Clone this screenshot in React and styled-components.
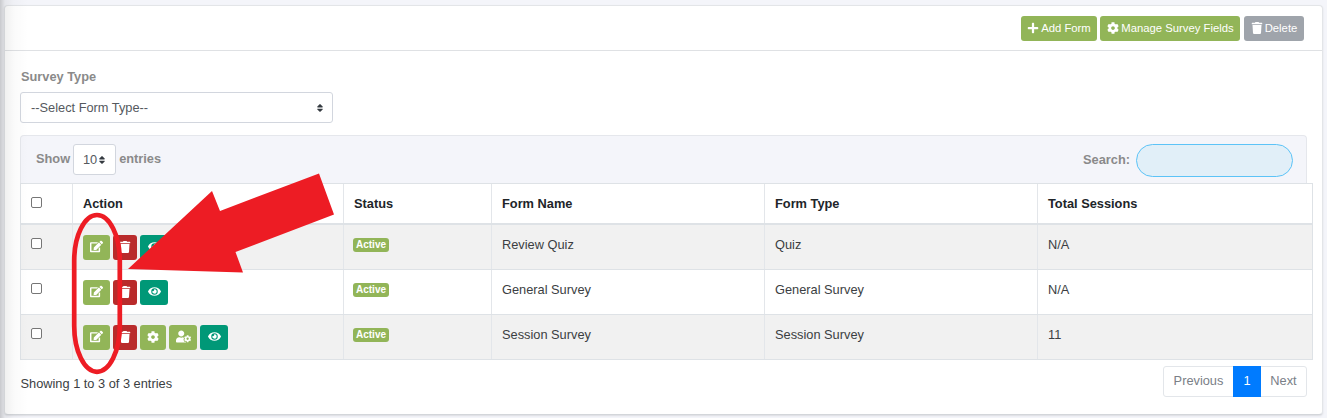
import React from "react";
import styled, { createGlobalStyle } from "styled-components";
import {
  FaPlus,
  FaCog,
  FaTrash,
  FaEdit,
  FaEye,
  FaUserCog,
  FaSort,
} from "react-icons/fa";

const green = "#92b558";
const red = "#b92b2b";
const teal = "#009877";

const rows = [
  { name: "Review Quiz", type: "Quiz", sessions: "N/A" },
  { name: "General Survey", type: "General Survey", sessions: "N/A" },
  { name: "Session Survey", type: "Session Survey", sessions: "11", full: true },
];

const App = () => {
  return (
    <Page>
      <GlobalStyle />
      <Card>
        <CardHeader>
          <HeadButton $w={76}>
            <FaPlus size={12} />
            Add Form
          </HeadButton>
          <HeadButton $w={140}>
            <FaCog size={12} />
            Manage Survey Fields
          </HeadButton>
          <HeadButton $w={60} $bg="#9fa4ab">
            <FaTrash size={12} />
            Delete
          </HeadButton>
        </CardHeader>

        <Body>
          <Label>Survey Type</Label>
          <Select>
            --Select Form Type--
            <Caret />
          </Select>

          <Toolbar>
            <Length>
              Show
              <LengthSelect>
                10
                <Caret />
              </LengthSelect>
              entries
            </Length>
            <SearchHold>
              Search:
              <SearchInput type="text" />
            </SearchHold>
          </Toolbar>

          <Table>
            <HeadRow>
              <Cell>
                <Check type="checkbox" />
              </Cell>
              <Cell>Action</Cell>
              <Cell>Status</Cell>
              <Cell>Form Name</Cell>
              <Cell>Form Type</Cell>
              <Cell>Total Sessions</Cell>
            </HeadRow>
            {rows.map((row) => (
              <Row key={row.name}>
                <Cell>
                  <Check type="checkbox" />
                </Cell>
                <Actions>
                  <IconButton $w={27}>
                    <FaEdit size={13} />
                  </IconButton>
                  <IconButton $w={24} $bg={red}>
                    <FaTrash size={12} />
                  </IconButton>
                  {row.full && (
                    <>
                      <IconButton $w={26}>
                        <FaCog size={12} />
                      </IconButton>
                      <IconButton $w={28}>
                        <FaUserCog size={15} />
                      </IconButton>
                    </>
                  )}
                  <IconButton $w={28} $bg={teal}>
                    <FaEye size={13} />
                  </IconButton>
                </Actions>
                <Cell>
                  <Badge>Active</Badge>
                </Cell>
                <Cell>{row.name}</Cell>
                <Cell>{row.type}</Cell>
                <Cell>{row.sessions}</Cell>
              </Row>
            ))}
          </Table>

          <Footer>
            <Info>Showing 1 to 3 of 3 entries</Info>
            <Pagination>
              <PageItem $w={69}>Previous</PageItem>
              <PageItem $w={28} $active>
                1
              </PageItem>
              <PageItem $w={45}>Next</PageItem>
            </Pagination>
          </Footer>
        </Body>
      </Card>

      <EdgeShadow />
      <Marks viewBox="0 0 1327 418">
        <rect
          x="74.2"
          y="215"
          width="45.6"
          height="156.8"
          rx="22.8"
          ry="46"
          fill="none"
          stroke="#ed1c24"
          strokeWidth="4.7"
        />
        <polygon
          points="128,269 212,191 220,211 319,173.5 334,214.5 235.5,252 243,272.5"
          fill="#ed1c24"
        />
      </Marks>
    </Page>
  );
};

const Caret = () => <CaretIcon size={10} />;

export default App;

const GlobalStyle = createGlobalStyle`
  * {
    box-sizing: border-box;
  }
  body {
    margin: 0;
    font-family: "Liberation Sans", Arial, sans-serif;
    font-size: 12.8px;
    color: #3b3e42;
  }
`;
const Page = styled.div`
  position: relative;
  width: 1327px;
  height: 418px;
  padding: 5px 4px 0 4px;
  background: #f4f5fa;
  overflow: hidden;
`;
const Card = styled.div`
  height: 410px;
  background: white;
  border: 1px solid #e3e5e8;
  border-bottom-color: #d3d6da;
  border-radius: 4px;
  box-shadow: 0 1px 2px rgba(0, 0, 0, 0.1);
`;
const CardHeader = styled.div`
  height: 45px;
  display: flex;
  justify-content: flex-end;
  gap: 3.5px;
  padding: 9.5px 18.5px 0 0;
  border-bottom: 1px solid #dfe1e4;
`;
const HeadButton = styled.button`
  width: ${(p) => p.$w}px;
  height: 25px;
  padding: 0 0 0 1px;
  display: flex;
  align-items: center;
  justify-content: center;
  gap: 2px;
  background: ${(p) => p.$bg || green};
  color: white;
  border: none;
  border-radius: 3px;
  font-family: inherit;
  font-size: 11.3px;
  white-space: nowrap;
`;
const Body = styled.div`
  padding: 18px 15px 0;
`;
const Label = styled.div`
  height: 23px;
  line-height: 15px;
  padding-left: 1px;
  color: #8a8a8a;
  font-weight: bold;
`;
const Select = styled.div`
  width: 313px;
  height: 31px;
  padding: 0 7px 0 10px;
  display: flex;
  align-items: center;
  justify-content: space-between;
  color: #55595e;
  border: 1px solid #d2d6de;
  border-radius: 3px;
`;
const CaretIcon = styled(FaSort)`
  color: #343a40;
`;
const Toolbar = styled.div`
  width: 1287px;
  height: 48px;
  margin-top: 12px;
  padding: 0 13.5px 0 15px;
  display: flex;
  justify-content: space-between;
  background: #f4f5fa;
  border: 1px solid #e5e7ec;
  border-bottom: none;
  border-radius: 4px 4px 0 0;
  color: #8a8a8a;
  font-weight: bold;
`;
const Length = styled.div`
  display: flex;
  gap: 3px;
  padding-top: 8px;
  line-height: 29px;
`;
const LengthSelect = styled.div`
  width: 43px;
  height: 31px;
  padding-left: 1px;
  display: flex;
  align-items: center;
  justify-content: center;
  background: white;
  color: #55595e;
  border: 1px solid #d2d6de;
  border-radius: 3px;
  font-weight: normal;
`;
const SearchHold = styled.label`
  display: flex;
  gap: 5.5px;
  padding-top: 8px;
  line-height: 31px;
`;
const SearchInput = styled.input`
  width: 157px;
  height: 33px;
  background: #e1eff8;
  border: 1px solid #5cc3f7;
  border-radius: 17px;
  outline: none;
`;
const Table = styled.div`
  width: 1293px;
  border: 1px solid #dee2e6;
  border-bottom: none;
`;
const Row = styled.div`
  height: 45px;
  display: grid;
  grid-template-columns: 51px 271px 148px 273px 273px 1fr;
  border-bottom: 1px solid #dee2e6;

  &:nth-child(even) {
    background: #f1f1f1;
  }
`;
const HeadRow = styled(Row)`
  height: 41px;
  border-bottom-width: 2px;
  color: #212529;
  font-weight: bold;
`;
const Cell = styled.div`
  padding: 12px 0 0 10px;
  line-height: 15px;

  & + & {
    border-left: 1px solid #e3e6ea;
  }
`;
const Check = styled.input`
  display: block;
  width: 11px;
  height: 11px;
  margin: 1px 0 0;
  appearance: none;
  background: white;
  border: 1px solid #767676;
  border-radius: 2px;
`;
const Actions = styled(Cell)`
  display: flex;
  gap: 3px;
  padding-top: 9.6px;
`;
const IconButton = styled.button`
  width: ${(p) => p.$w}px;
  height: 25px;
  padding: 0 0 1px;
  display: flex;
  align-items: center;
  justify-content: center;
  background: ${(p) => p.$bg || green};
  color: white;
  border: none;
  border-radius: 3px;
`;
const Badge = styled.span`
  display: block;
  width: 36px;
  height: 14px;
  margin: 1px 0 0 -1px;
  background: ${green};
  color: white;
  border-radius: 3px;
  font-size: 10px;
  font-weight: bold;
  line-height: 14px;
  text-align: center;
`;
const Footer = styled.div`
  width: 1287px;
  display: flex;
  justify-content: space-between;
  padding-top: 6px;
`;
const Info = styled.div`
  padding: 10px 0 0 0.5px;
  line-height: 15px;
`;
const Pagination = styled.div`
  display: flex;
  height: 31px;
  border: 1px solid #e3e6ea;
  border-radius: 3px;
`;
const PageItem = styled.div`
  width: ${(p) => p.$w}px;
  height: 31px;
  margin-top: -1px;
  line-height: 30px;
  text-align: center;
  color: ${(p) => (p.$active ? "white" : "#7a8087")};
  background: ${(p) => (p.$active ? "#007bff" : "transparent")};
`;
// soft shade falling over the page from the side menu
const EdgeShadow = styled.div`
  position: absolute;
  left: 0;
  top: 0;
  width: 28px;
  height: 418px;
  background: linear-gradient(
    to right,
    rgba(0, 0, 0, 0.18),
    rgba(0, 0, 0, 0.06) 5px,
    rgba(0, 0, 0, 0.02) 14px,
    transparent
  );
  pointer-events: none;
`;
const Marks = styled.svg`
  position: absolute;
  left: 0;
  top: 0;
  width: 1327px;
  height: 418px;
  pointer-events: none;
`;
